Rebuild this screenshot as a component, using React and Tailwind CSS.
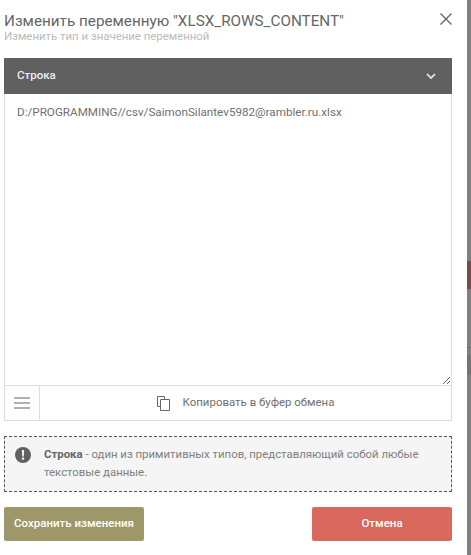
import React from "react";

export default function App() {
  return (
    <div className="flex h-[555px] w-[471px] overflow-hidden bg-white font-['Roboto',sans-serif]">
      <div className="flex w-[467px] flex-col bg-white pl-[4px] pr-[15px] pt-[12px]">
        <div className="flex h-[34px] items-start justify-between">
          <div className="flex flex-col">
            <div className="h-[18px] text-[15.25px] leading-[18px] text-[#666666] whitespace-nowrap">Изменить переменную "XLSX_ROWS_CONTENT"</div>
            <div className="mt-[-1px] text-[11.4px] leading-[14px] text-[#bbbbbb] whitespace-nowrap">Изменить тип и значение переменной</div>
          </div>
          <svg width="12" height="12" viewBox="0 0 12 12" className="mt-[1px]">
            <path d="M.5.5l11 11M11.5.5l-11 11" stroke="#666" strokeWidth="1.4" fill="none" />
          </svg>
        </div>
        <div className="mt-[12px] flex h-[36px] items-center justify-between bg-[#606060] pl-[13px] pr-[16px]">
          <span className="text-[11.5px] font-medium text-[#eeeeee]">Строка</span>
          <svg width="10" height="6" viewBox="0 0 10 6">
            <path d="M1 1l4 4 4-4" stroke="#eee" strokeWidth="1.7" fill="none" />
          </svg>
        </div>
        <textarea
          readOnly
          defaultValue="D:/PROGRAMMING//csv/SaimonSilantev5982@rambler.ru.xlsx"
          className="block h-[291px] w-full resize-y border-x border-[#dddddd] bg-white px-[12px] py-[10px] text-[11.68px] leading-[16px] text-[#707070] outline-none"
        />
        <div className="flex h-[36px] border border-[#dddddd]">
          <div className="flex w-[35px] shrink-0 items-center justify-center border-r border-[#dddddd]">
            <svg width="16" height="12" viewBox="0 0 16 12">
              <path d="M0 1h16M0 6h16M0 11h16" stroke="#b0b0b0" strokeWidth="2" />
            </svg>
          </div>
          <div className="flex flex-1 items-center justify-center gap-[13px]">
            <svg width="13" height="15" viewBox="0 0 13 15" fill="none" stroke="#666" strokeWidth="1">
              <path d="M.5.5h7v3M.5.5v10h3" />
              <path d="M3.5 3.5h9v11h-9z" fill="#fff" />
            </svg>
            <span className="text-[11.45px] text-[#707070]">Копировать в буфер обмена</span>
          </div>
        </div>
        <div className="mt-[15px] flex h-[56px] items-start border border-dashed border-[#555555] bg-[#f5f5f5] pl-[10px] pr-[10px] pt-[8px]">
          <svg width="16" height="16" viewBox="0 0 16 16" className="mt-[2px] shrink-0">
            <circle cx="8" cy="8" r="8" fill="#606060" />
            <path d="M6.9 3h2.2l-.3 6.4H7.2zM6.9 10.5h2.2v2.2H6.9z" fill="#f5f5f5" />
          </svg>
          <p className="ml-[13px] text-[11.4px] leading-[18px] text-[#808080]">
            <b className="font-bold text-[#666666]">Строка</b> - один из примитивных типов, представляющий собой любые текстовые данные.
          </p>
        </div>
        <div className="mt-[15px] flex justify-between">
          <button className="h-[34px] w-[140px] rounded-[2px] bg-[#9e9769] text-[11.5px] font-medium text-[#ffffff]">Сохранить изменения</button>
          <button className="h-[34px] w-[140px] rounded-[2px] bg-[#d9685e] text-[11.5px] font-medium text-[#ffffff]">Отмена</button>
        </div>
      </div>
      <div className="relative w-[4px] flex-1 bg-[#808080]">
        <div className="absolute left-0 top-[261px] h-[28px] w-full bg-[#7a4a4a]" />
        <div className="absolute left-0 top-[347px] h-px w-full bg-[#6c6c6c]" />
        <div className="absolute left-0 top-[355px] h-[20px] w-full bg-[#747474]" />
      </div>
    </div>
  );
}
